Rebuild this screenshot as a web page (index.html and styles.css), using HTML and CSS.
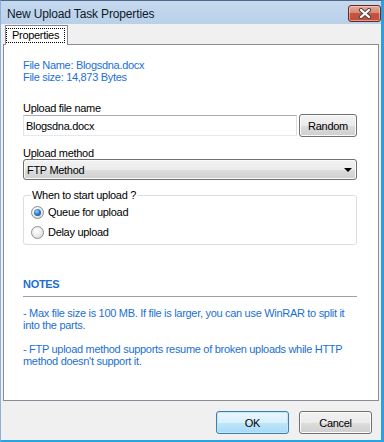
FILE: index.html
```html
<!DOCTYPE html>
<html lang="en">
  <head>
    <meta charset="UTF-8" />
    <meta name="viewport" content="width=device-width, initial-scale=1.0" />
    <title>New Upload Task Properties</title>
    <link rel="stylesheet" href="styles.css">
  </head>
  <body>
    <div class="window">
      <div class="titlebar">
        <span class="title">New Upload Task Properties</span>
        <button class="close-btn" type="button" aria-label="Close">
          <svg width="14" height="11" viewBox="0 0 14 11">
            <path d="M3 2 L11 9 M11 2 L3 9" stroke="#4a4a4a" stroke-width="4.2" stroke-linecap="round" fill="none" />
            <path d="M3 2 L11 9 M11 2 L3 9" stroke="#ffffff" stroke-width="2.2" stroke-linecap="round" fill="none" />
          </svg>
        </button>
      </div>

      <div class="client">
        <div class="tabs">
          <div class="tab active"><span class="focus">Properties</span></div>
        </div>

        <div class="panel">
          <div class="info">
            <div>File Name: Blogsdna.docx</div>
            <div>File size: 14,873 Bytes</div>
          </div>

          <div class="label">Upload file name</div>
          <div class="name-row">
            <input type="text" class="textbox" value="Blogsdna.docx" />
            <button type="button" class="btn random-btn">Random</button>
          </div>

          <div class="label method-label">Upload method</div>
          <div class="combo">
            <span>FTP Method</span>
            <span class="arrow"></span>
          </div>

          <fieldset class="group">
            <legend>When to start upload ?</legend>
            <div class="radio-row">
              <span class="radio checked"></span>
              <span>Queue for upload</span>
            </div>
            <div class="radio-row">
              <span class="radio"></span>
              <span>Delay upload</span>
            </div>
          </fieldset>

          <div class="notes-title">NOTES</div>
          <div class="notes-line"></div>
          <p class="note">- Max file size is 100 MB. If file is larger, you can use WinRAR to split it into the parts.</p>
          <p class="note">- FTP upload method supports resume of broken uploads while HTTP method doesn't support it.</p>
        </div>

        <div class="actions">
          <button type="button" class="btn default-btn">OK</button>
          <button type="button" class="btn">Cancel</button>
        </div>
      </div>
    </div>
  </body>
</html>
```

FILE: styles.css
```css
* {
  box-sizing: border-box;
}

body {
  margin: 0;
  font-family: 'Liberation Sans', Arial, sans-serif;
  font-size: 11px;
  letter-spacing: -0.3px;
  color: #000;
  background: #f0f0f0;
}

.window {
  width: 384px;
  height: 442px;
  border-top: 1px solid #50698a;
  border-left: 1px solid #8fb1d6;
  border-right: 3px solid #2f9fe2;
  border-bottom: 2px solid #22a6e4;
  background: #f0f0f0;
  display: flex;
  flex-direction: column;
}

.titlebar {
  height: 23px;
  display: flex;
  justify-content: space-between;
  align-items: flex-start;
  padding-left: 6px;
  background: linear-gradient(#c5d9ee, #b9d0e9);
}

.title {
  margin-top: 6px;
  font-size: 12px;
  line-height: 14px;
  letter-spacing: -0.15px;
  color: #0d1a2a;
}

.close-btn {
  margin-top: 4px;
  width: 33px;
  height: 17px;
  padding: 0;
  border: 1px solid #6a2820;
  border-radius: 3px;
  background: linear-gradient(#e6a897 0%, #d88a77 45%, #c45442 50%, #c14e3c 100%);
  box-shadow: inset 0 0 0 1px rgba(255, 220, 210, 0.55);
  display: flex;
  align-items: center;
  justify-content: center;
}

.client {
  flex: 1;
  padding: 1px 2px 0 2px;
  display: flex;
  flex-direction: column;
}

.tabs {
  display: flex;
  padding-left: 2px;
  position: relative;
  z-index: 1;
}

.tab {
  border: 1px solid #898c95;
  border-bottom: none;
  background: #fff;
  padding: 2px 2px 2px 0;
  margin-bottom: -1px;
}

.focus {
  display: block;
  border: 1px dotted #000;
  padding: 0 5px;
  line-height: 13px;
}

.panel {
  height: 357px;
  border: 1px solid #898c95;
  background: #fff;
  padding: 14px 21px 0 19px;
}

.info {
  color: #1b6fd4;
  line-height: 12px;
}

.label {
  margin-top: 19px;
  line-height: 12px;
}

.method-label {
  margin-top: 10px;
}

.name-row {
  display: flex;
  align-items: center;
  gap: 2px;
  height: 23px;
}

.textbox {
  flex: 1;
  min-width: 0;
  height: 21px;
  margin: 0;
  padding: 0 2px;
  font: inherit;
  letter-spacing: inherit;
  color: #000;
  border: 1px solid;
  border-color: #abadb3 #dbdfe6 #e3e9ef #e2e3ea;
  outline: none;
}

.btn {
  height: 23px;
  padding: 0;
  font: inherit;
  letter-spacing: inherit;
  color: #000;
  border: 1px solid #707070;
  border-radius: 3px;
  background: linear-gradient(#f2f2f2 0%, #ebebeb 50%, #dddddd 51%, #cfcfcf 100%);
  box-shadow: inset 0 0 0 1px #fbfbfb;
}

.random-btn {
  width: 58px;
}

.combo {
  height: 21px;
  display: flex;
  align-items: center;
  justify-content: space-between;
  padding: 0 4px 0 3px;
  border: 1px solid #707070;
  border-radius: 3px;
  background: linear-gradient(#f2f2f2 0%, #ebebeb 50%, #dddddd 51%, #cfcfcf 100%);
  box-shadow: inset 0 0 0 1px #fbfbfb;
}

.arrow {
  width: 0;
  height: 0;
  border-left: 4px solid transparent;
  border-right: 4px solid transparent;
  border-top: 4px solid #000;
}

.group {
  margin: 9px 0 0 0;
  padding: 1px 7px 2px 7px;
  border: 1px solid #d5dfe5;
  border-radius: 3px;
}

.group legend {
  padding: 0 1px;
  line-height: 12px;
}

.radio-row {
  height: 20px;
  display: flex;
  align-items: center;
  gap: 4px;
}

.radio {
  width: 13px;
  height: 13px;
  border-radius: 50%;
  border: 1px solid #8e8f8f;
  background: radial-gradient(circle at 40% 35%, #ffffff 0%, #eeeeee 45%, #cfcfcf 100%);
  display: flex;
  align-items: center;
  justify-content: center;
}

.radio.checked::after {
  content: "";
  width: 7px;
  height: 7px;
  border-radius: 50%;
  background: radial-gradient(circle at 40% 35%, #9fd6ff 0%, #2f7fd0 45%, #143e7a 100%);
}

.notes-title {
  margin-top: 33px;
  font-weight: bold;
  color: #1b6fd4;
  line-height: 12px;
}

.notes-line {
  margin-top: 6px;
  height: 1px;
  background: #a0a0a0;
}

.note {
  margin: 10px -4px 0 0;
  color: #1b6fd4;
  line-height: 12px;
}

.note + .note {
  margin-top: 12px;
}

.actions {
  display: flex;
  justify-content: flex-end;
  gap: 10px;
  padding: 10px 7px 0 0;
}

.actions .btn {
  width: 73px;
}

.default-btn {
  border-color: #3c7fb1;
  background: linear-gradient(#eaf6fd 0%, #d9f0fc 50%, #bee6fd 51%, #a7d9f5 100%);
  box-shadow: inset 0 0 0 1px #c4e5f6;
}
```
